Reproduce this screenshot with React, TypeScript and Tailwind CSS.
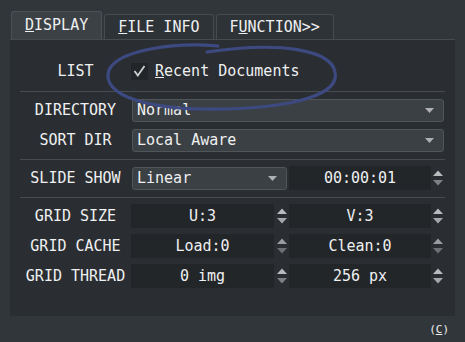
import React from "react";

const Up = ({ c }: { c: string }) => (
  <svg width="10" height="6" viewBox="0 0 10 6"><path d="M0 6 L5 0.5 L10 6 Z" fill={c} /></svg>
);
const Down = ({ c }: { c: string }) => (
  <svg width="10" height="6" viewBox="0 0 10 6"><path d="M0 0 L5 5.5 L10 0 Z" fill={c} /></svg>
);

const Arrows = ({ w, up, down }: { w: string; up: string; down: string }) => (
  <div className={`${w} h-full flex flex-col items-center justify-between py-[4px]`}>
    <Up c={up} />
    <Down c={down} />
  </div>
);

const Combo = ({ text, w }: { text: string; w: string }) => (
  <div className={`${w} h-[23px] ml-[1px] bg-[#3b4045] border border-[#50555a] rounded-[3px] flex items-center justify-between pl-[4px] pr-[9px]`}>
    <span className="leading-none">{text}</span>
    <svg width="9" height="5" viewBox="0 0 9 5"><path d="M0 0 L4.5 5 L9 0 Z" fill="#aeb0b2" /></svg>
  </div>
);

const Field = ({ text, w }: { text: string; w: string }) => (
  <div className={`${w} h-full bg-[#232629] flex items-center justify-center leading-none`}>{text}</div>
);

const Label = ({ children }: { children: React.ReactNode }) => (
  <div className="w-[111px] shrink-0 text-center leading-none">{children}</div>
);

const Sep = ({ mt }: { mt: string }) => <div className={`${mt} h-px bg-[#474c51]`} />;

export default function App() {
  return (
    <div
      className="relative w-[465px] h-[342px] overflow-hidden bg-[#31363b] text-[#eff0f1] text-[15px] font-['DejaVu_Sans_Mono',monospace]"
    >
      <div className="flex items-end gap-[2px] pl-[11px] pt-[11px] h-[39px]">
        <div className="h-[28px] px-[13px] flex items-center bg-[#3c4146] border border-b-0 border-[#4c5156] rounded-t-[3px]">
          <span><u>D</u>ISPLAY</span>
        </div>
        <div className="h-[25px] px-[13px] flex items-center bg-[#2e3337] border border-b-0 border-[#464b50] rounded-t-[3px]">
          <span><u>F</u>ILE INFO</span>
        </div>
        <div className="h-[25px] px-[13px] flex items-center bg-[#2e3337] border border-b-0 border-[#464b50] rounded-t-[3px]">
          <span>F<u>U</u>NCTION&gt;&gt;</span>
        </div>
      </div>

      <div className="ml-[10px] w-[445px] h-[277px] bg-[#2a2e32] border-t border-[#464b50] px-[10px] flex flex-col">
        <div className="mt-[19px] h-[24px] flex items-center">
          <Label>LIST</Label>
          <div className="w-[17px] h-[17px] bg-[#232629] flex items-center justify-center">
            <svg width="13" height="12" viewBox="0 0 13 12">
              <path d="M1.5 6 L4.8 10.5 L11.5 1" stroke="#cfd0d1" strokeWidth="1.8" fill="none" />
            </svg>
          </div>
          <span className="ml-[7px] leading-none"><u>R</u>ecent Documents</span>
        </div>

        <Sep mt="mt-[8px]" />

        <div className="mt-[7px] h-[23px] flex items-center">
          <Label>DIRECTORY</Label>
          <Combo text="Normal" w="w-[312px]" />
        </div>
        <div className="mt-[7px] h-[23px] flex items-center">
          <Label>SORT DIR</Label>
          <Combo text="Local Aware" w="w-[312px]" />
        </div>

        <Sep mt="mt-[7px]" />

        <div className="mt-[6px] h-[24px] flex items-center">
          <Label>SLIDE SHOW</Label>
          <Combo text="Linear" w="w-[155px]" />
          <div className="ml-[2px] h-full flex">
            <Field text="00:00:01" w="w-[142px]" />
          </div>
          <Arrows w="w-[14px]" up="#b9bbbd" down="#7d8084" />
        </div>

        <Sep mt="mt-[7px]" />

        {[
          ["GRID SIZE", "U:3", "V:3", "#b9bbbd", "#a5a7a9", "#b9bbbd", "#a5a7a9"],
          ["GRID CACHE", "Load:0", "Clean:0", "#9a9c9f", "#6d7074", "#9a9c9f", "#6d7074"],
          ["GRID THREAD", "0 img", "256 px", "#b9bbbd", "#7d8084", "#b9bbbd", "#a5a7a9"],
        ].map(([l, a, b, u1, d1, u2, d2]) => (
          <div key={l} className="mt-[6px] h-[24px] flex items-center">
            <Label>{l}</Label>
            <Field text={a} w="w-[143px]" />
            <Arrows w="w-[15px]" up={u1} down={d1} />
            <Field text={b} w="w-[142px]" />
            <Arrows w="w-[14px]" up={u2} down={d2} />
          </div>
        ))}
      </div>

      <div className="flex justify-end pr-[16px] mt-[8px] text-[11px] leading-[12px]">
        <span>(<u>C</u>)</span>
      </div>

      <svg
        className="absolute inset-0 pointer-events-none"
        width="465"
        height="342"
        viewBox="0 0 465 342"
      >
        <path
          d="M218 46 C175 42 118 50 109 70 C100 96 150 111 226 109 C296 107 340 94 335 72 C331 50 280 41 207 52"
          stroke="#3d4a82"
          strokeWidth="3.2"
          fill="none"
          strokeLinecap="round"
        />
      </svg>
    </div>
  );
}
